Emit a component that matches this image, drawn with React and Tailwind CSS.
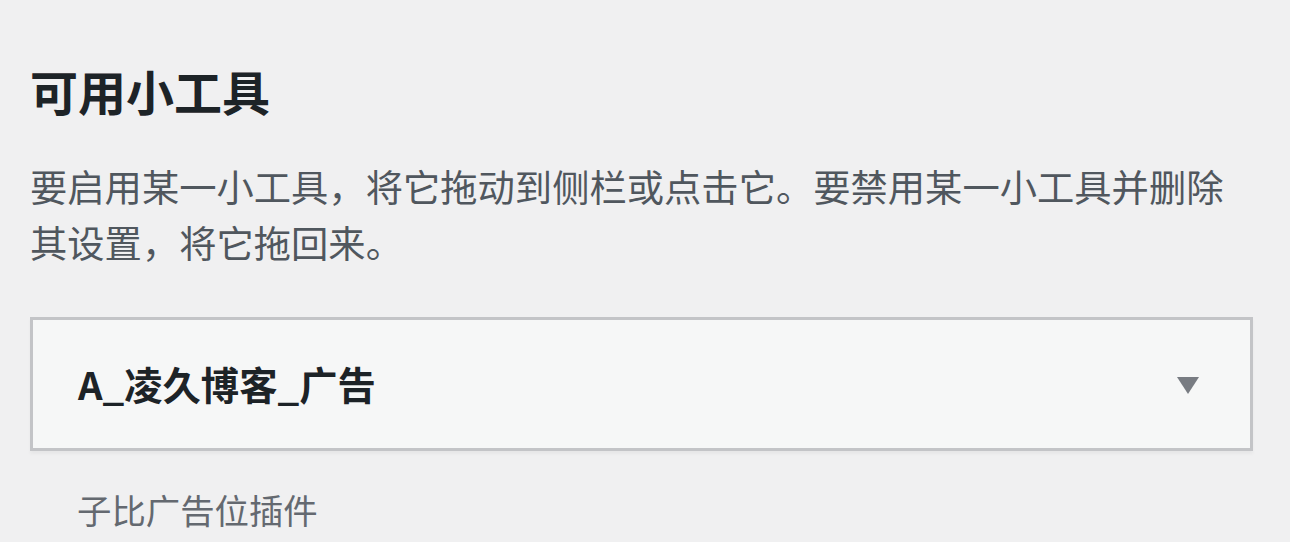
import React from "react";

const WidgetsPanel = () => {
  return (
    <div
      className="min-h-screen bg-[#f0f0f1] pl-[30px] pt-[59px]"
      style={{ fontFamily: '"Noto Sans CJK SC", "Noto Sans", sans-serif' }}
    >
      <div className="w-[1223px]">
        {/* Heading */}
        <h2 className="text-[48px] leading-[62px] font-semibold text-[#1d2327]">
          可用小工具
        </h2>

        {/* Description */}
        <p className="mt-[38px] text-[37.3px] leading-[55.5px] text-[#50575e]">
          要启用某一小工具，将它拖动到侧栏或点击它。要禁用某一小工具并删除其设置，将它拖回来。
        </p>

        {/* Widget card */}
        <div className="mt-[47px] h-[134px] border-[3px] border-[#c3c4c7] bg-[#f6f7f7] shadow-[0_3px_3px_rgba(0,0,0,0.04)] flex items-center justify-between pl-[45px] pr-[51px]">
          <h3 className="text-[38.3px] leading-none font-semibold text-[#1d2327]">
            A_凌久博客_广告
          </h3>
          <svg width="22" height="17" viewBox="0 0 22 17" className="mt-[2px]">
            <path d="M0 0 H22 L11 17 Z" fill="#787c82" />
          </svg>
        </div>

        {/* Widget description */}
        <p className="mt-[33px] pl-[47px] text-[34.4px] leading-[51px] text-[#646970]">
          子比广告位插件
        </p>
      </div>
    </div>
  );
};

export default function App() {
  return <WidgetsPanel />;
}
